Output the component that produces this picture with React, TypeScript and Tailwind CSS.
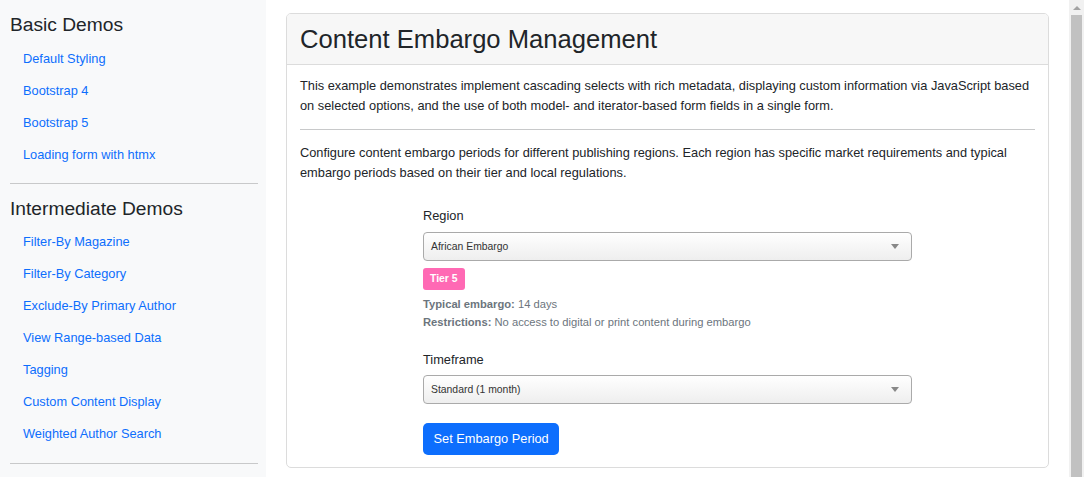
import React from "react";

const font = { fontFamily: '"Liberation Sans", Arial, sans-serif' };

function SideLink({ children }: { children: React.ReactNode }) {
  return (
    <a href="#" className="block px-[13px] py-[6px] text-[12.8px] leading-[20px] text-[#0d6efd]">
      {children}
    </a>
  );
}

function Select({ value }: { value: string }) {
  return (
    <div className="flex h-[29px] w-full items-center justify-between rounded-[4px] border border-[#aaa] bg-gradient-to-b from-white to-[#eeeeee] pl-[7px] pr-[12px]">
      <span className="text-[10.4px] text-[#333]">{value}</span>
      <span className="h-0 w-0 border-x-[4px] border-t-[5px] border-x-transparent border-t-[#888]" />
    </div>
  );
}

export default function App() {
  return (
    <div style={font} className="flex h-[477px] w-full overflow-hidden text-[#212529]">
      <aside className="w-[266px] shrink-0 bg-[#f8f9fa] pl-[10px] pr-[8px] pt-[13px]">
        <h4 className="mb-[6px] text-[19.2px] leading-[24px] text-[#212529]">Basic Demos</h4>
        <SideLink>Default Styling</SideLink>
        <SideLink>Bootstrap 4</SideLink>
        <SideLink>Bootstrap 5</SideLink>
        <SideLink>Loading form with htmx</SideLink>
        <hr className="mt-[12px] mb-[13px] border-t border-[#c8c9ca]" />
        <h4 className="mb-[5px] text-[19.2px] leading-[24px] text-[#212529]">Intermediate Demos</h4>
        <SideLink>Filter-By Magazine</SideLink>
        <SideLink>Filter-By Category</SideLink>
        <SideLink>Exclude-By Primary Author</SideLink>
        <SideLink>View Range-based Data</SideLink>
        <SideLink>Tagging</SideLink>
        <SideLink>Custom Content Display</SideLink>
        <SideLink>Weighted Author Search</SideLink>
        <hr className="mt-[13px] border-t border-[#c8c9ca]" />
      </aside>
      <main className="flex-1 bg-white px-[20px] pt-[13px]">
        <div className="overflow-hidden rounded-[5px] border border-[#dcdcdc]">
          <div className="border-b border-[#dcdcdc] bg-[#f7f7f7] px-[13px] pt-[10px] pb-[9px]">
            <h2 className="text-[25.6px] leading-[31px] text-[#212529]">Content Embargo Management</h2>
          </div>
          <div className="px-[13px] pt-[11px] pb-[12px] text-[12.8px] leading-[20px]">
            <p className="mb-[13px]">
              This example demonstrates implement cascading selects with rich metadata, displaying custom information via JavaScript based on selected options, and the use of both model- and iterator-based form fields in a single form.
            </p>
            <hr className="my-0 border-t border-[#c8c9ca]" />
            <p className="mt-[13px] mb-[10px]">
              Configure content embargo periods for different publishing regions. Each region has specific market requirements and typical embargo periods based on their tier and local regulations.
            </p>
            <div className="mx-auto w-[489px] pt-[13px]">
              <label className="mb-[6px] block">Region</label>
              <Select value="African Embargo" />
              <div className="mt-[7px] inline-block rounded-[3px] bg-[#ff69b4] px-[7px] py-[5px] text-[10.4px] font-bold leading-[12px] text-white">
                Tier 5
              </div>
              <div className="mt-[5px] text-[11.2px] leading-[18px] text-[#6c757d]">
                <div><b>Typical embargo:</b> 14 days</div>
                <div><b>Restrictions:</b> No access to digital or print content during embargo</div>
              </div>
              <label className="mt-[19px] mb-[5px] block">Timeframe</label>
              <Select value="Standard (1 month)" />
              <button className="mt-[19px] block h-[32px] rounded-[5px] bg-[#0d6efd] px-[10.5px] text-[12.8px] text-white">
                Set Embargo Period
              </button>
            </div>
          </div>
        </div>
      </main>
      <div className="flex w-[15px] shrink-0 flex-col items-center bg-[#f1f1f1]">
        <div className="flex h-[15px] w-full items-center justify-center">
          <span className="h-0 w-0 border-x-[4px] border-b-[4px] border-x-transparent border-b-[#a3a3a3]" />
        </div>
        <div className="w-[11px] flex-1 bg-[#c1c1c1]" />
      </div>
    </div>
  );
}
